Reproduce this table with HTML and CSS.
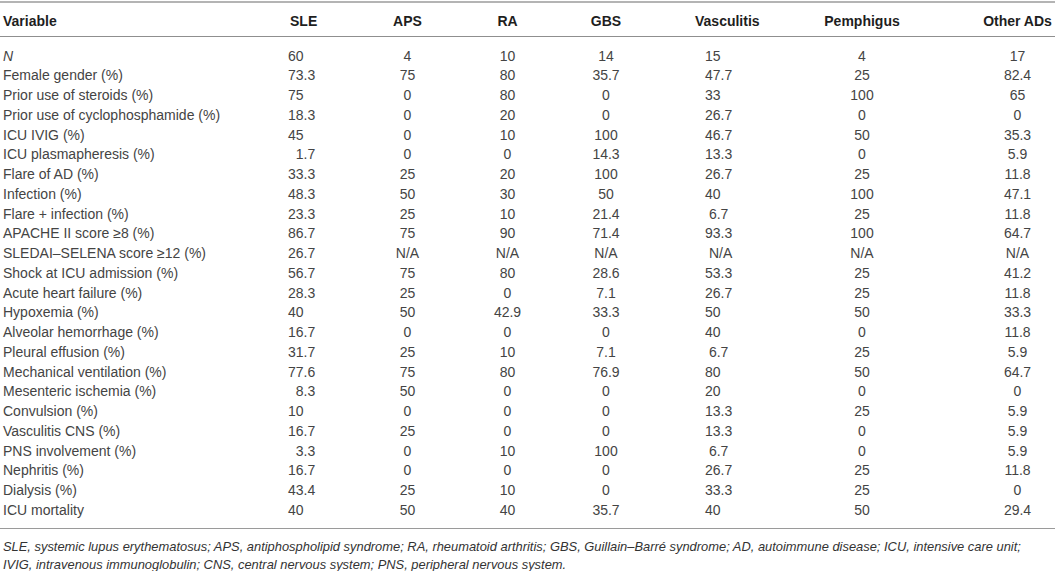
FILE: index.html
```html
<!DOCTYPE html>
<html lang="en">
<head>
<meta charset="utf-8">
<title>Patient characteristics by autoimmune disease</title>
<link rel="stylesheet" href="styles.css">
</head>
<body>
<table class="data">
  <colgroup>
    <col class="c-var"><col class="c-sle"><col class="c-aps"><col class="c-ra"><col class="c-gbs"><col class="c-vas"><col class="c-pem"><col class="c-oth">
  </colgroup>
  <thead>
    <tr>
      <th class="var">Variable</th>
      <th class="sle">SLE</th>
      <th class="mid">APS</th>
      <th class="mid">RA</th>
      <th class="mid">GBS</th>
      <th class="vas">Vasculitis</th>
      <th class="mid">Pemphigus</th>
      <th class="oth">Other ADs</th>
    </tr>
  </thead>
  <tbody>
    <tr class="first"><td class="var"><i>N</i></td><td class="sle">60</td><td class="mid">4</td><td class="mid">10</td><td class="mid">14</td><td class="vas">15</td><td class="mid">4</td><td class="oth">17</td></tr>
    <tr><td class="var">Female gender (%)</td><td class="sle">73.3</td><td class="mid">75</td><td class="mid">80</td><td class="mid">35.7</td><td class="vas">47.7</td><td class="mid">25</td><td class="oth">82.4</td></tr>
    <tr><td class="var">Prior use of steroids (%)</td><td class="sle">75</td><td class="mid">0</td><td class="mid">80</td><td class="mid">0</td><td class="vas">33</td><td class="mid">100</td><td class="oth">65</td></tr>
    <tr><td class="var">Prior use of cyclophosphamide (%)</td><td class="sle">18.3</td><td class="mid">0</td><td class="mid">20</td><td class="mid">0</td><td class="vas">26.7</td><td class="mid">0</td><td class="oth">0</td></tr>
    <tr><td class="var">ICU IVIG (%)</td><td class="sle">45</td><td class="mid">0</td><td class="mid">10</td><td class="mid">100</td><td class="vas">46.7</td><td class="mid">50</td><td class="oth">35.3</td></tr>
    <tr><td class="var">ICU plasmapheresis (%)</td><td class="sle">&#8199;1.7</td><td class="mid">0</td><td class="mid">0</td><td class="mid">14.3</td><td class="vas">13.3</td><td class="mid">0</td><td class="oth">5.9</td></tr>
    <tr><td class="var">Flare of AD (%)</td><td class="sle">33.3</td><td class="mid">25</td><td class="mid">20</td><td class="mid">100</td><td class="vas">26.7</td><td class="mid">25</td><td class="oth">11.8</td></tr>
    <tr><td class="var">Infection (%)</td><td class="sle">48.3</td><td class="mid">50</td><td class="mid">30</td><td class="mid">50</td><td class="vas">40</td><td class="mid">100</td><td class="oth">47.1</td></tr>
    <tr><td class="var">Flare + infection (%)</td><td class="sle">23.3</td><td class="mid">25</td><td class="mid">10</td><td class="mid">21.4</td><td class="vas">&#8200;6.7</td><td class="mid">25</td><td class="oth">11.8</td></tr>
    <tr><td class="var">APACHE II score &#8805;8 (%)</td><td class="sle">86.7</td><td class="mid">75</td><td class="mid">90</td><td class="mid">71.4</td><td class="vas">93.3</td><td class="mid">100</td><td class="oth">64.7</td></tr>
    <tr><td class="var">SLEDAI&#8211;SELENA score &#8805;12 (%)</td><td class="sle">26.7</td><td class="mid">N/A</td><td class="mid">N/A</td><td class="mid">N/A</td><td class="vas">&#8200;N/A</td><td class="mid">N/A</td><td class="oth">N/A</td></tr>
    <tr><td class="var">Shock at ICU admission (%)</td><td class="sle">56.7</td><td class="mid">75</td><td class="mid">80</td><td class="mid">28.6</td><td class="vas">53.3</td><td class="mid">25</td><td class="oth">41.2</td></tr>
    <tr><td class="var">Acute heart failure (%)</td><td class="sle">28.3</td><td class="mid">25</td><td class="mid">0</td><td class="mid">7.1</td><td class="vas">26.7</td><td class="mid">25</td><td class="oth">11.8</td></tr>
    <tr><td class="var">Hypoxemia (%)</td><td class="sle">40</td><td class="mid">50</td><td class="mid">42.9</td><td class="mid">33.3</td><td class="vas">50</td><td class="mid">50</td><td class="oth">33.3</td></tr>
    <tr><td class="var">Alveolar hemorrhage (%)</td><td class="sle">16.7</td><td class="mid">0</td><td class="mid">0</td><td class="mid">0</td><td class="vas">40</td><td class="mid">0</td><td class="oth">11.8</td></tr>
    <tr><td class="var">Pleural effusion (%)</td><td class="sle">31.7</td><td class="mid">25</td><td class="mid">10</td><td class="mid">7.1</td><td class="vas">&#8200;6.7</td><td class="mid">25</td><td class="oth">5.9</td></tr>
    <tr><td class="var">Mechanical ventilation (%)</td><td class="sle">77.6</td><td class="mid">75</td><td class="mid">80</td><td class="mid">76.9</td><td class="vas">80</td><td class="mid">50</td><td class="oth">64.7</td></tr>
    <tr><td class="var">Mesenteric ischemia (%)</td><td class="sle">&#8199;8.3</td><td class="mid">50</td><td class="mid">0</td><td class="mid">0</td><td class="vas">20</td><td class="mid">0</td><td class="oth">0</td></tr>
    <tr><td class="var">Convulsion (%)</td><td class="sle">10</td><td class="mid">0</td><td class="mid">0</td><td class="mid">0</td><td class="vas">13.3</td><td class="mid">25</td><td class="oth">5.9</td></tr>
    <tr><td class="var">Vasculitis CNS (%)</td><td class="sle">16.7</td><td class="mid">25</td><td class="mid">0</td><td class="mid">0</td><td class="vas">13.3</td><td class="mid">0</td><td class="oth">5.9</td></tr>
    <tr><td class="var">PNS involvement (%)</td><td class="sle">&#8199;3.3</td><td class="mid">0</td><td class="mid">10</td><td class="mid">100</td><td class="vas">&#8200;6.7</td><td class="mid">0</td><td class="oth">5.9</td></tr>
    <tr><td class="var">Nephritis (%)</td><td class="sle">16.7</td><td class="mid">0</td><td class="mid">0</td><td class="mid">0</td><td class="vas">26.7</td><td class="mid">25</td><td class="oth">11.8</td></tr>
    <tr><td class="var">Dialysis (%)</td><td class="sle">43.4</td><td class="mid">25</td><td class="mid">10</td><td class="mid">0</td><td class="vas">33.3</td><td class="mid">25</td><td class="oth">0</td></tr>
    <tr class="last"><td class="var">ICU mortality</td><td class="sle">40</td><td class="mid">50</td><td class="mid">40</td><td class="mid">35.7</td><td class="vas">40</td><td class="mid">50</td><td class="oth">29.4</td></tr>
  </tbody>
</table>
<p class="note">SLE, systemic lupus erythematosus; APS, antiphospholipid syndrome; RA, rheumatoid arthritis; GBS, Guillain&#8211;Barré syndrome; AD, autoimmune disease; ICU, intensive care unit;<br>IVIG, intravenous immunoglobulin; CNS, central nervous system; PNS, peripheral nervous system.</p>
</body>
</html>
```

FILE: styles.css
```css
html, body {
  margin: 0;
  padding: 0;
  background: #ffffff;
}

body {
  font-family: "Liberation Sans", Arial, sans-serif;
  color: #444444;
  width: 1055px;
}

.data {
  width: 1055px;
  table-layout: fixed;
  border-collapse: collapse;
  margin-top: 1px;
  border-top: 2px solid #b4b4b4;
  font-size: 14px;
}

.c-var { width: 260px; }
.c-sle { width: 95px; }
.c-aps { width: 105px; }
.c-ra  { width: 95px; }
.c-gbs { width: 102px; }
.c-vas { width: 143px; }
.c-pem { width: 124px; }
.c-oth { width: 131px; }

.data th,
.data td {
  box-sizing: border-box;
  padding: 0;
  white-space: nowrap;
  font-weight: normal;
}

.data th {
  height: 34px;
  padding-top: 3px;
  font-weight: bold;
  color: #1e1e1e;
  border-bottom: 1px solid #8f8f8f;
  vertical-align: middle;
}

.data td {
  height: 19.75px;
  line-height: 19.75px;
  vertical-align: middle;
}

.data .first td { padding-top: 10px; height: 29.75px; }
.data .last td {
  padding-bottom: 7px;
  height: 26.75px;
  border-bottom: 1px solid #9a9a9a;
}

.var { text-align: left; padding-left: 3px !important; }
th.sle { text-align: left; padding-left: 30px !important; }
td.sle { text-align: left; padding-left: 28px !important; }
.mid { text-align: center; }
th.vas { text-align: left; padding-left: 38px !important; }
td.vas { text-align: left; padding-left: 48px !important; }
.oth { text-align: center; padding-left: 56px !important; }

.note {
  margin: 0;
  padding: 9px 0 0 3px;
  font-size: 12.9px;
  line-height: 18px;
  font-style: italic;
  color: #333333;
  white-space: nowrap;
}
```
